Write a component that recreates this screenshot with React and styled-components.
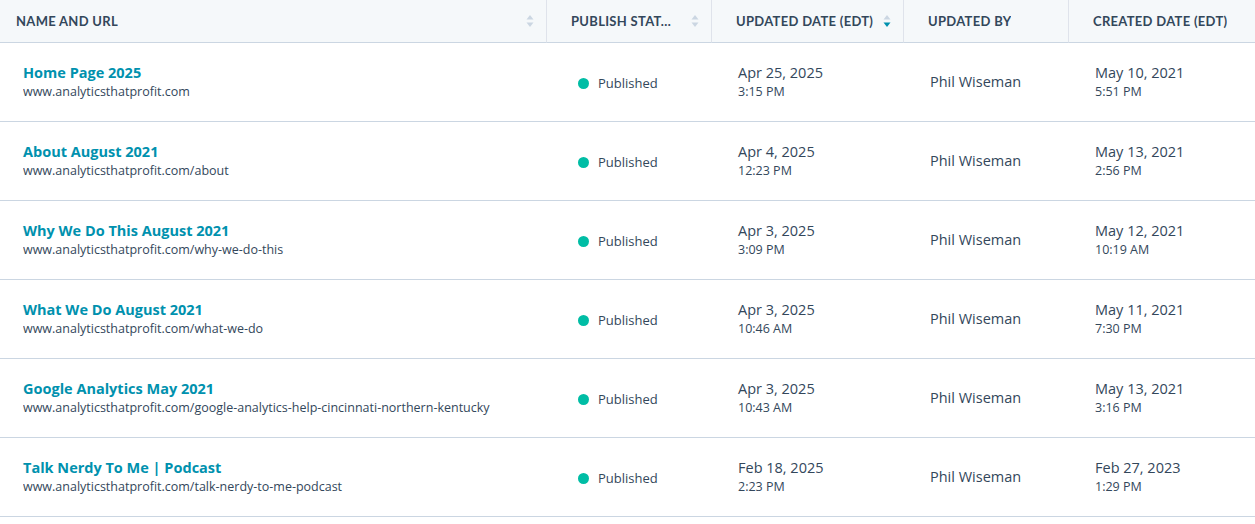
import React from 'react';
import styled, { createGlobalStyle } from 'styled-components';

const Global = createGlobalStyle`
  body { margin: 0; font-family: "Open Sans", Lato, sans-serif; color: #33475b; background: #fff; }
`;

const Table = styled.div`
  width: 1255px;
  display: grid;
  grid-template-columns: 547px 165px 192px 165px 186px;
`;

const Head = styled.div`
  height: 43px;
  box-sizing: border-box;
  background: #f5f8fa;
  border-bottom: 1px solid #cbd6e2;
  border-right: ${p => (p.last ? 'none' : '1px solid #dfe3eb')};
  padding: 0 12px 0 ${p => (p.first ? '16px' : '24px')};
  display: flex;
  align-items: center;
  justify-content: space-between;
  gap: 6px;
  font-family: Lato, sans-serif;
  font-size: 13px;
  font-weight: 700;
  letter-spacing: 0.3px;
  color: #33475b;
  white-space: nowrap;
`;

const Label = styled.span`
  overflow: hidden;
  text-overflow: ellipsis;
`;

const Cell = styled.div`
  height: 79px;
  box-sizing: border-box;
  border-bottom: 1px solid #cbd6e2;
  padding: 0 16px 0 ${p => (p.first ? '23px' : '26px')};
  display: flex;
  flex-direction: column;
  justify-content: center;
  min-width: 0;
`;

const Name = styled.a`
  color: #0091ae;
  font-weight: 700;
  font-size: 14.5px;
  line-height: 20px;
  text-decoration: none;
`;

const Url = styled.div`
  font-size: 12.5px;
  line-height: 18px;
  white-space: nowrap;
  overflow: hidden;
  text-overflow: ellipsis;
  max-width: 494px;
`;

const Status = styled.div`
  display: flex;
  align-items: center;
  gap: 9px;
  font-size: 13px;
  padding-left: 5px;
  padding-top: 2px;
`;

const Dot = styled.span`
  width: 11px;
  height: 11px;
  border-radius: 50%;
  background: #00bda5;
`;

const Main = styled.div`
  font-size: 14.5px;
  line-height: 20px;
`;

const Sub = styled.div`
  font-size: 12.5px;
  line-height: 18px;
`;

const Sort = ({ active }) => (
  <svg width="8" height="14" viewBox="0 0 8 14">
    <path d="M4 1 L7.5 5.5 H0.5 Z" fill="#cbd6e2" />
    <path d="M4 13 L7.5 8.5 H0.5 Z" fill={active ? '#0091ae' : '#cbd6e2'} />
  </svg>
);

const rows = [
  ['Home Page 2025', 'www.analyticsthatprofit.com', 'Apr 25, 2025', '3:15 PM', 'May 10, 2021', '5:51 PM'],
  ['About August 2021', 'www.analyticsthatprofit.com/about', 'Apr 4, 2025', '12:23 PM', 'May 13, 2021', '2:56 PM'],
  ['Why We Do This August 2021', 'www.analyticsthatprofit.com/why-we-do-this', 'Apr 3, 2025', '3:09 PM', 'May 12, 2021', '10:19 AM'],
  ['What We Do August 2021', 'www.analyticsthatprofit.com/what-we-do', 'Apr 3, 2025', '10:46 AM', 'May 11, 2021', '7:30 PM'],
  ['Google Analytics May 2021', 'www.analyticsthatprofit.com/google-analytics-help-cincinnati-northern-kentucky', 'Apr 3, 2025', '10:43 AM', 'May 13, 2021', '3:16 PM'],
  ['Talk Nerdy To Me | Podcast', 'www.analyticsthatprofit.com/talk-nerdy-to-me-podcast', 'Feb 18, 2025', '2:23 PM', 'Feb 27, 2023', '1:29 PM'],
];

export default function App() {
  return (
    <>
      <Global />
      <Table>
        <Head first><Label>NAME AND URL</Label><Sort /></Head>
        <Head><Label>PUBLISH STAT…</Label><Sort /></Head>
        <Head><Label>UPDATED DATE (EDT)</Label><Sort active /></Head>
        <Head><Label>UPDATED BY</Label></Head>
        <Head last><Label>CREATED DATE (EDT)</Label></Head>
        {rows.map(r => (
          <React.Fragment key={r[0]}>
            <Cell first><Name href="#">{r[0]}</Name><Url>{r[1]}</Url></Cell>
            <Cell><Status><Dot />Published</Status></Cell>
            <Cell><Main>{r[2]}</Main><Sub>{r[3]}</Sub></Cell>
            <Cell><Main>Phil Wiseman</Main></Cell>
            <Cell><Main>{r[4]}</Main><Sub>{r[5]}</Sub></Cell>
          </React.Fragment>
        ))}
      </Table>
    </>
  );
}
